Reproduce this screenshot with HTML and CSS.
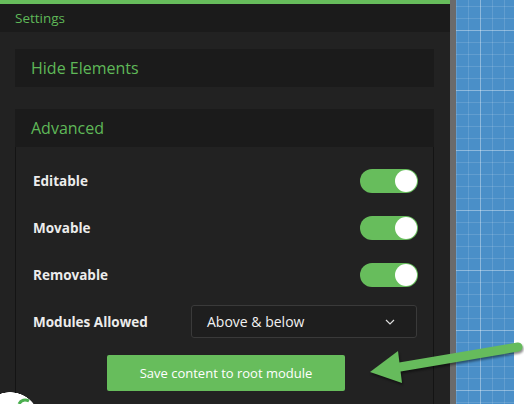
FILE: index.html
```html
<!DOCTYPE html>
<html lang="en">
<head>
    <meta charset="UTF-8">
    <meta name="viewport" content="width=device-width, initial-scale=1.0">
    <title>Settings</title>
    <link rel="stylesheet" href="styles.css">
</head>
<body>

<div class="page">
    <div class="panel">
        <div class="panel-header">Settings</div>

        <div class="panel-body">
            <div class="box">
                <div class="box-title">Hide Elements</div>
            </div>

            <div class="box advanced">
                <div class="box-title">Advanced</div>
                <div class="box-content">
                    <div class="row">
                        <span class="label">Editable</span>
                        <span class="toggle on"><span class="knob"></span></span>
                    </div>
                    <div class="row">
                        <span class="label">Movable</span>
                        <span class="toggle on"><span class="knob"></span></span>
                    </div>
                    <div class="row">
                        <span class="label">Removable</span>
                        <span class="toggle on"><span class="knob"></span></span>
                    </div>
                    <div class="row">
                        <span class="label">Modules Allowed</span>
                        <div class="select">
                            <span>Above &amp; below</span>
                            <svg class="chevron" width="10" height="6" viewBox="0 0 10 6">
                                <path d="M1 1 L5 5 L9 1" fill="none" stroke="#ddd" stroke-width="1.2"/>
                            </svg>
                        </div>
                    </div>
                    <div class="actions">
                        <button class="save-btn">Save content to root module</button>
                    </div>
                </div>
            </div>
        </div>
    </div>

    <div class="divider"></div>
    <div class="canvas"></div>
    <div class="gutter"></div>
</div>

<!-- callout arrow drawn over the page -->
<svg class="callout" width="524" height="404" viewBox="0 0 524 404">
    <g class="arrow">
        <line x1="518" y1="347" x2="394" y2="368" stroke="#66bb5c" stroke-width="9" stroke-linecap="round"/>
        <polygon points="370,372 398,351 402,383" fill="#66bb5c"/>
    </g>
</svg>

<div class="corner-badge">
    <svg class="badge-icon" width="14" height="8" viewBox="0 0 14 8">
        <path d="M2 8 C4 4 8 3 12 5" fill="none" stroke="#4caf50" stroke-width="3"/>
    </svg>
</div>

</body>
</html>
```

FILE: styles.css
```css
body, html {
    margin: 0;
    padding: 0;
    height: 100%;
    overflow: hidden;
    background: #fff;
    font-family: "Open Sans", "Segoe UI", sans-serif;
}
.page {
    display: flex;
    height: 404px;
    overflow: hidden;
}
.panel {
    width: 450px;
    background-color: #222222;
    border-top: 4px solid #67bd5c;
    box-sizing: border-box;
    overflow: hidden;
}
.panel-header {
    height: 28px;
    line-height: 28px;
    padding-left: 15px;
    font-size: 13.5px;
    color: #5fb858;
    background-color: #1b1b1b;
}
.panel-body {
    padding: 17px 16px 0 15px;
}
.box {
    background-color: #1c1c1c;
    margin-bottom: 22px;
}
.box-title {
    height: 38px;
    line-height: 38px;
    padding-left: 16px;
    font-size: 16px;
    color: #5fb858;
    background-color: #1b1b1b;
}
.advanced {
    margin-bottom: 0;
}
.box-content {
    background-color: #222222;
    border-left: 1px solid #141414;
    border-right: 1px solid #141414;
    padding: 10px 15px 40px 17px;
}
.row {
    display: flex;
    align-items: center;
    justify-content: space-between;
    height: 47px;
}
.label {
    font-size: 13.5px;
    font-weight: 700;
    color: #ececec;
    width: 158px;
}
.toggle {
    width: 58px;
    height: 24px;
    border-radius: 12px;
    background-color: #67bd5c;
    display: flex;
    align-items: center;
    justify-content: flex-end;
    padding: 0 1px;
    box-sizing: border-box;
}
.knob {
    width: 22px;
    height: 22px;
    border-radius: 50%;
    background-color: #fff;
}
.select {
    flex: 1;
    height: 33px;
    margin-right: 1px;
    border: 1px solid #3a3a3a;
    border-radius: 3px;
    background-color: #1e1e1e;
    display: flex;
    align-items: center;
    justify-content: space-between;
    padding: 0 21px 0 15px;
    box-sizing: border-box;
    font-size: 14px;
    color: #f2f2f2;
}
.actions {
    display: flex;
    margin-top: 10px;
    padding-left: 74px;
}
.save-btn {
    width: 238px;
    height: 36px;
    background-color: #67bd5c;
    color: #fff;
    border: none;
    border-radius: 2px;
    font-family: "Open Sans", sans-serif;
    font-size: 13px;
}
.divider {
    width: 6px;
    background-color: #6b6b6b;
}
.canvas {
    width: 58px;
    background-color: #4a8fc8;
    background-image:
        linear-gradient(90deg, rgba(255, 255, 255, 0.28) 1px, transparent 1px),
        linear-gradient(0deg, rgba(255, 255, 255, 0.28) 1px, transparent 1px),
        linear-gradient(90deg, rgba(255, 255, 255, 0.13) 1px, transparent 1px),
        linear-gradient(0deg, rgba(255, 255, 255, 0.13) 1px, transparent 1px);
    background-size: 60px 60px, 60px 60px, 12px 12px, 12px 12px;
    background-position: 24px 0, 0 31px, 0 0, 0 7px;
}
.gutter {
    flex: 1;
    background-color: #fff;
}
.callout {
    position: absolute;
    top: 0;
    left: 0;
    pointer-events: none;
}
.arrow {
    filter: drop-shadow(1px 2px 1px rgba(0, 0, 0, 0.45));
}
.corner-badge {
    position: absolute;
    left: 0;
    bottom: 0;
    width: 42px;
    height: 12px;
    background: radial-gradient(circle at 10px 30px, #fff 29.5px, transparent 30px);
}
.badge-icon {
    display: block;
    margin: 4px 0 0 17px;
}
```
